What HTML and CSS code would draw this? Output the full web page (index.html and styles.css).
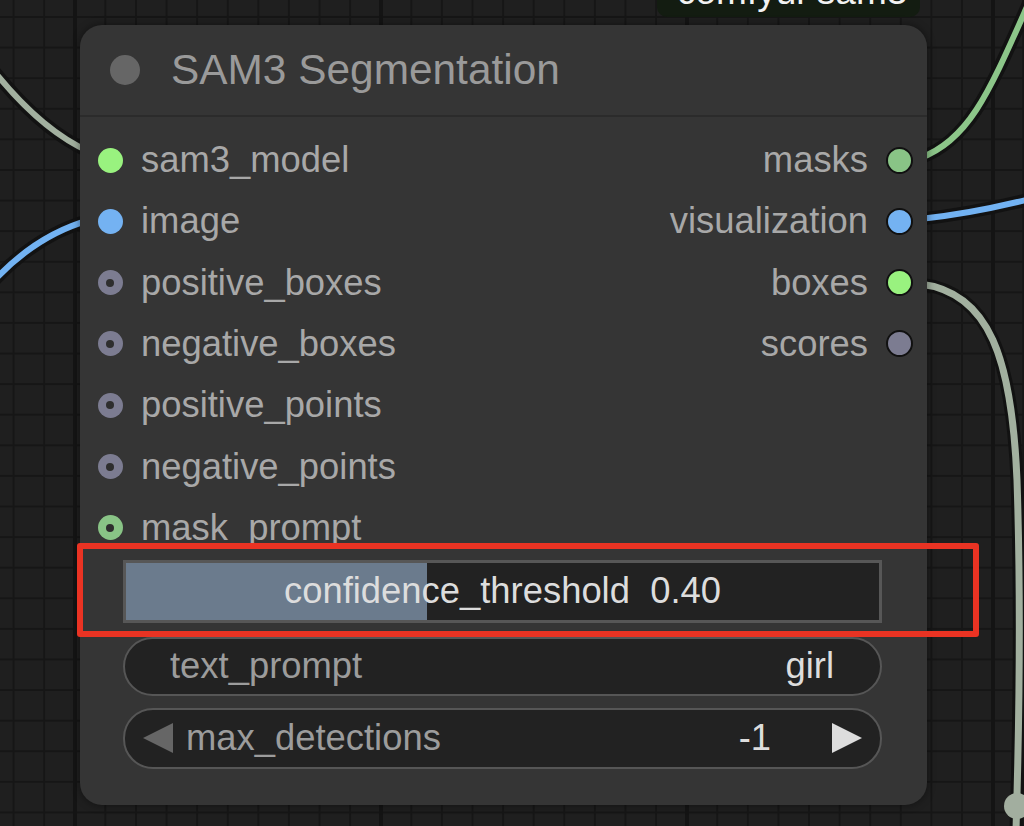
FILE: index.html
```html
<!DOCTYPE html>
<html lang="en">
<head>
<meta charset="utf-8">
<title>SAM3 Segmentation</title>
<link rel="stylesheet" href="styles.css">
</head>
<body>
<div class="canvas">
  <svg class="wires" width="1024" height="826" viewBox="0 0 1024 826">
    <g class="wire-outline">
      <path d="M -10 66 Q 40 130 90 152"/>
      <path d="M -10 285 Q 35 235 90 220"/>
      <path d="M 920 158 C 970 140, 990 90, 1030 0"/>
      <path d="M 920 219 Q 970 214 1030 199"/>
      <path d="M 920 284 C 990 292, 1012 360, 1017 480 C 1021 600, 1020 700, 1016 830"/>
    </g>
    <path class="wire w-gray" d="M -10 66 Q 40 130 90 152"/>
    <path class="wire w-blue" d="M -10 285 Q 35 235 90 220"/>
    <path class="wire w-green" d="M 920 158 C 970 140, 990 90, 1030 0"/>
    <path class="wire w-blue" d="M 920 219 Q 970 214 1030 199"/>
    <path class="wire w-gray wide" d="M 920 284 C 990 292, 1012 360, 1017 480 C 1021 600, 1020 700, 1016 830"/>
    <circle class="wire-end" cx="1017" cy="806" r="13"/>
  </svg>

  <div class="group-label">comfyui-sam3</div>

  <div class="node">
    <div class="node-title">
      <span class="title-dot"></span>
      <span class="title-text">SAM3 Segmentation</span>
    </div>

    <div class="slots">
      <div class="slot-col inputs">
        <div class="slot"><span class="dot c-model"></span><span>sam3_model</span></div>
        <div class="slot"><span class="dot c-image"></span><span>image</span></div>
        <div class="slot"><span class="dot ring c-gray"></span><span>positive_boxes</span></div>
        <div class="slot"><span class="dot ring c-gray"></span><span>negative_boxes</span></div>
        <div class="slot"><span class="dot ring c-gray"></span><span>positive_points</span></div>
        <div class="slot"><span class="dot ring c-gray"></span><span>negative_points</span></div>
        <div class="slot"><span class="dot ring c-mask"></span><span>mask_prompt</span></div>
      </div>
      <div class="slot-col outputs">
        <div class="slot out"><span>masks</span><span class="dot outdot c-mask"></span></div>
        <div class="slot out"><span>visualization</span><span class="dot outdot c-image"></span></div>
        <div class="slot out"><span>boxes</span><span class="dot outdot c-model"></span></div>
        <div class="slot out"><span>scores</span><span class="dot outdot c-gray"></span></div>
      </div>
    </div>

    <div class="widgets">
      <div class="slider" style="--value: 40%;">
        <span class="slider-text">confidence_threshold  0.40</span>
      </div>
      <div class="pill">
        <span class="w-label">text_prompt</span>
        <span class="w-value">girl</span>
      </div>
      <div class="pill number">
        <svg class="arrow arrow-left" width="30" height="30" viewBox="0 0 30 30"><polygon points="30,0 30,30 0,15"/></svg>
        <span class="w-label num-label">max_detections</span>
        <span class="w-value num-value">-1</span>
        <svg class="arrow arrow-right" width="30" height="30" viewBox="0 0 30 30"><polygon points="0,0 0,30 30,15"/></svg>
      </div>
    </div>
  </div>

  <div class="highlight"></div>
</div>
</body>
</html>
```

FILE: styles.css
```css
* {
  box-sizing: border-box;
}

html, body {
  margin: 0;
  padding: 0;
}

body {
  width: 1024px;
  height: 826px;
  overflow: hidden;
  font-family: "Liberation Sans", Arial, sans-serif;
  background-color: #1f1f1f;
  background-image:
    linear-gradient(to right, #141414 4px, transparent 4px),
    linear-gradient(to right, #161616 2px, transparent 2px),
    linear-gradient(to bottom, #161616 2px, transparent 2px);
  background-size: 306px 100%, 30.6px 30.6px, 30.6px 30.6px;
  background-position: 73px 0, 12.6px 16px, 12.6px 16px;
}

.canvas {
  position: relative;
  width: 1024px;
  height: 826px;
}

/* wires */
.wires {
  position: absolute;
  left: 0;
  top: 0;
}

.wire-outline path {
  fill: none;
  stroke: #121212;
  stroke-width: 13;
}

.wire {
  fill: none;
  stroke-width: 6;
}

.wire.wide {
  stroke-width: 7;
}

.w-gray { stroke: #a2b09f; }
.w-blue { stroke: #72b2f2; }
.w-green { stroke: #8cc689; }

.wire-end {
  fill: #a2ae9f;
}

/* group label at top */
.group-label {
  position: absolute;
  left: 657px;
  top: -40px;
  width: 263px;
  height: 57px;
  background: #131c11;
  border-radius: 10px;
  display: flex;
  align-items: flex-end;
  padding: 0 0 7px 20px;
  font-size: 37px;
  line-height: 37px;
  color: #f2f2f2;
}

/* node */
.node {
  position: absolute;
  left: 80px;
  top: 25px;
  width: 847px;
  height: 780px;
  background: #353535;
  border-radius: 22px;
  box-shadow: 0 0 8px rgba(0, 0, 0, 0.45);
  display: flex;
  flex-direction: column;
}

.node-title {
  height: 92px;
  display: flex;
  align-items: center;
  gap: 31px;
  padding-left: 30px;
  border-bottom: 2px solid #2b2b2b;
}

.title-dot {
  width: 30px;
  height: 30px;
  border-radius: 50%;
  background: #666666;
  flex: none;
}

.title-text {
  font-size: 42.4px;
  color: #9a9a9a;
}

.slots {
  display: flex;
  justify-content: space-between;
  padding: 12.4px 14.5px 0 17.5px;
}

.slot-col {
  display: flex;
  flex-direction: column;
}

.slot {
  height: 61.3px;
  display: flex;
  align-items: center;
  gap: 18.5px;
  font-size: 36.4px;
  color: #a8a8a8;
}

.slot.out {
  justify-content: flex-end;
  gap: 17.5px;
}

.dot {
  width: 25px;
  height: 25px;
  border-radius: 50%;
  flex: none;
  display: flex;
  align-items: center;
  justify-content: center;
}

.dot.ring::after {
  content: "";
  width: 8px;
  height: 8px;
  border-radius: 50%;
  background: #2e2e2e;
}

.dot.outdot {
  width: 27px;
  height: 27px;
  border: 2.5px solid #111111;
}

.c-model { background: #99f27f; }
.c-image { background: #74b2f2; }
.c-gray { background: #7c7c91; }
.c-mask { background: #89c486; }

/* widgets */
.widgets {
  display: flex;
  flex-direction: column;
  padding: 0 45px 0 43px;
  margin-top: 1.5px;
}

.slider {
  height: 63px;
  border: 3px solid #575757;
  background: linear-gradient(to right, #6b7b8d var(--value), #222222 var(--value));
  display: flex;
  align-items: center;
  justify-content: center;
}

.slider-text {
  white-space: pre;
  font-size: 36.4px;
  color: #dddddd;
}

.pill {
  height: 59px;
  margin-top: 14px;
  border: 2px solid #565656;
  border-radius: 30px;
  background: #222222;
  display: flex;
  align-items: center;
  justify-content: space-between;
  padding: 0 46px 0 45px;
  font-size: 36.4px;
}

.pill.number {
  height: 61px;
  margin-top: 12px;
  padding: 0 18px;
  justify-content: flex-start;
}

.w-label {
  color: #9c9c9c;
}

.w-value {
  color: #dddddd;
}

.num-label {
  margin-left: 13px;
  flex: 1;
}

.num-value {
  margin-right: 61px;
}

.arrow {
  flex: none;
}

.arrow-left polygon {
  fill: #666666;
}

.arrow-right polygon {
  fill: #dddddd;
}

/* annotation */
.highlight {
  position: absolute;
  left: 77px;
  top: 543px;
  width: 902px;
  height: 94px;
  border: 6px solid #ea3323;
  border-radius: 3px;
}
```
